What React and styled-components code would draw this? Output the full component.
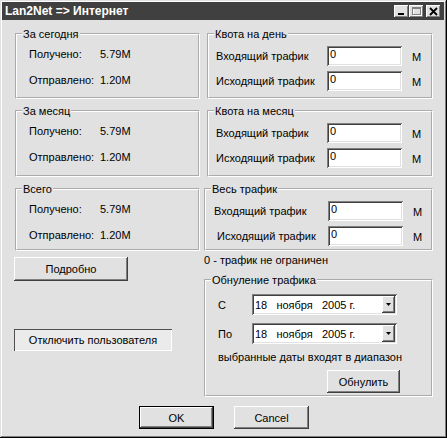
import styled, { createGlobalStyle } from "styled-components";

const GlobalStyle = createGlobalStyle`
  html, body {
    margin: 0;
    padding: 0;
    background: #e1e1e1;
  }
  body {
    font-family: "Liberation Sans", Arial, sans-serif;
    font-size: 11px;
    color: #000;
  }
`;

const raised = `
  box-shadow: inset -1px -1px #404040, inset 1px 1px #fff,
    inset -2px -2px #808080, inset 2px 2px #e1e1e1;
`;

const sunken = `
  box-shadow: inset 1px 1px #808080, inset -1px -1px #fff,
    inset 2px 2px #404040, inset -2px -2px #e1e1e1;
`;

function App() {
  return (
    <>
      <GlobalStyle />
      <Window>
        <TitleBar>
          <Title>Lan2Net =&gt; Интернет</Title>
          <Caps>
            <CapButton>
              <svg width="15" height="13" viewBox="0 0 15 13">
                <rect x="4" y="8" width="6" height="2" fill="#000" />
              </svg>
            </CapButton>
            <CapButton>
              <svg width="15" height="13" viewBox="0 0 15 13">
                <rect x="4.5" y="3.5" width="8" height="7" fill="none" stroke="#fff" />
                <rect x="3.5" y="2.5" width="8" height="7" fill="none" stroke="#808080" />
                <rect x="3" y="2" width="9" height="2" fill="#808080" />
              </svg>
            </CapButton>
            <CapButton $gap>
              <svg width="15" height="13" viewBox="0 0 15 13">
                <path d="M4 3 L11 10 M11 3 L4 10" stroke="#000" strokeWidth="1.8" />
              </svg>
            </CapButton>
          </Caps>
        </TitleBar>
        <Body>
          <TopGrid>
            <StatGroup title="За сегодня" received="5.79M" sent="1.20M" />
            <QuotaGroup title="Квота на день" />
            <StatGroup title="За месяц" received="5.79M" sent="1.20M" />
            <QuotaGroup title="Квота на месяц" />
            <StatGroup title="Всего" received="5.79M" sent="1.20M" />
            <QuotaGroup title="Весь трафик" shift={3} indent={3} />
          </TopGrid>
          <Lower>
            <LeftCol>
              <Button $w={114} $h={24} $mt={6}>
                Подробно
              </Button>
              <PressedButton>Отключить пользователя</PressedButton>
            </LeftCol>
            <RightCol>
              <Note>0 - трафик не ограничен</Note>
              <ResetBox>
                <Caption>Обнуление трафика</Caption>
                <ResetBody>
                  <DateGrid>
                    <span>С</span>
                    <DateCombo value="18   ноября   2005 г." />
                    <span>По</span>
                    <DateCombo value="18   ноября   2005 г." />
                  </DateGrid>
                  <Hint>выбранные даты входят в диапазон</Hint>
                  <Button $w={73} $h={23} $mt={6} $mr={31} $right>
                    Обнулить
                  </Button>
                </ResetBody>
              </ResetBox>
            </RightCol>
          </Lower>
          <Footer>
            <Button $w={75} $h={23} $default>
              OK
            </Button>
            <Button $w={75} $h={23}>
              Cancel
            </Button>
          </Footer>
        </Body>
      </Window>
    </>
  );
}

function StatGroup({ title, received, sent }) {
  return (
    <GroupBox>
      <Caption>{title}</Caption>
      <StatGrid>
        <span>Получено:</span>
        <span>{received}</span>
        <span>Отправлено:</span>
        <span>{sent}</span>
      </StatGrid>
    </GroupBox>
  );
}

function QuotaGroup({ title, shift = 0, indent = 0 }) {
  return (
    <GroupBox $shift={shift}>
      <Caption>{title}</Caption>
      <QuotaGrid $shift={shift}>
        <span>Входящий трафик</span>
        <Field readOnly value="0" />
        <Unit>M</Unit>
        <Label $indent={indent}>Исходящий трафик</Label>
        <Field readOnly value="0" />
        <Unit>M</Unit>
      </QuotaGrid>
    </GroupBox>
  );
}

function DateCombo({ value }) {
  return (
    <Combo>
      <ComboText>{value}</ComboText>
      <ComboArrow>
        <svg width="5" height="3" viewBox="0 0 5 3">
          <path d="M0 0 H5 L2.5 3 Z" fill="#000" />
        </svg>
      </ComboArrow>
    </Combo>
  );
}

const Window = styled.div`
  box-sizing: border-box;
  width: 447px;
  height: 438px;
  padding: 2px 3px 3px 2px;
  background: #e1e1e1;
  box-shadow: inset -1px -1px #000, inset 1px 1px #e1e1e1,
    inset -2px -2px #808080, inset 2px 2px #fff;
  display: flex;
  flex-direction: column;
`;

const TitleBar = styled.div`
  height: 18px;
  background: #404040;
  display: flex;
  align-items: center;
  justify-content: space-between;
  padding: 0 3px 0 3px;
`;

const Title = styled.span`
  color: #fff;
  font-weight: bold;
  font-size: 12px;
`;

const Caps = styled.div`
  display: flex;
  align-items: center;
`;

const CapButton = styled.div`
  width: 15px;
  height: 13px;
  background: #e1e1e1;
  margin-left: ${(p) => (p.$gap ? 2 : 0)}px;
  ${raised}
  svg {
    display: block;
  }
`;

const Body = styled.div`
  padding: 8px 11px 0 13px;
  display: flex;
  flex-direction: column;
`;

const TopGrid = styled.div`
  display: grid;
  grid-template-columns: 185px 226px;
  grid-template-rows: 71px 72px 68px;
  column-gap: 7px;
  row-gap: 6px;
`;

const GroupBox = styled.fieldset`
  box-sizing: border-box;
  margin: 0 0 0 ${(p) => -(p.$shift || 0)}px;
  padding: 0;
  min-width: 0;
  border: 2px groove #fff;
`;

const Caption = styled.legend`
  margin-left: 5px;
  padding: 0 1px;
  font-size: 11px;
  line-height: 12px;
`;

const StatGrid = styled.div`
  display: grid;
  grid-template-columns: 71px auto;
  row-gap: 13px;
  padding: 8px 0 0 12px;
  line-height: 13px;
`;

const QuotaGrid = styled.div`
  display: grid;
  grid-template-columns: ${(p) => 111 + p.$shift}px 75px auto;
  row-gap: 5px;
  align-items: center;
  padding: 6px 0 0 ${(p) => (p.$shift ? 8 : 7)}px;
`;

const Label = styled.span`
  padding-left: ${(p) => p.$indent}px;
`;

const Field = styled.input`
  box-sizing: border-box;
  width: 75px;
  height: 20px;
  border: none;
  outline: none;
  margin: 0;
  padding: 0 3px 5px;
  background: #fff;
  font-family: inherit;
  font-size: 11px;
  color: #000;
  ${sunken}
`;

const Unit = styled.span`
  padding: 2px 0 0 10px;
`;

const Lower = styled.div`
  display: flex;
`;

const LeftCol = styled.div`
  width: 190px;
  margin-left: -1px;
  display: flex;
  flex-direction: column;
  align-items: flex-start;
`;

const RightCol = styled.div`
  width: 229px;
  display: flex;
  flex-direction: column;
`;

const Button = styled.button`
  box-sizing: border-box;
  width: ${(p) => p.$w}px;
  height: ${(p) => p.$h}px;
  margin: ${(p) => p.$mt || 0}px ${(p) => p.$mr || 0}px 0 0;
  align-self: ${(p) => (p.$right ? "flex-end" : "auto")};
  padding: 0;
  border: ${(p) => (p.$default ? "1px solid #000" : "none")};
  background: #e1e1e1;
  font-family: inherit;
  font-size: 11px;
  color: #000;
  ${raised}
`;

const PressedButton = styled.button`
  box-sizing: border-box;
  width: 158px;
  height: 22px;
  margin-top: 48px;
  padding: 0;
  border: none;
  background: #ebebeb;
  font-family: inherit;
  font-size: 11px;
  color: #000;
  box-shadow: inset 1px 1px #505050, inset -1px -1px #fff;
`;

const Note = styled.div`
  margin-top: 3px;
  line-height: 13px;
`;

const ResetBox = styled(GroupBox)`
  margin-top: 7px;
`;

const ResetBody = styled.div`
  display: flex;
  flex-direction: column;
  padding: 8px 0 2px 12px;
`;

const DateGrid = styled.div`
  display: grid;
  grid-template-columns: 34px 145px;
  row-gap: 8px;
  align-items: center;
`;

const Combo = styled.div`
  box-sizing: border-box;
  width: 145px;
  height: 21px;
  padding: 2px;
  background: #fff;
  display: flex;
  align-items: center;
  ${sunken}
`;

const ComboText = styled.span`
  flex: 1;
  padding-left: 1px;
  white-space: pre;
`;

const ComboArrow = styled.div`
  box-sizing: border-box;
  width: 13px;
  height: 17px;
  background: #e1e1e1;
  display: flex;
  align-items: center;
  justify-content: center;
  ${raised}
  svg {
    display: block;
  }
`;

const Hint = styled.div`
  margin-top: 7px;
  line-height: 13px;
`;

const Footer = styled.div`
  display: flex;
  justify-content: center;
  gap: 20px;
  margin-top: 9px;
`;

export default App;
